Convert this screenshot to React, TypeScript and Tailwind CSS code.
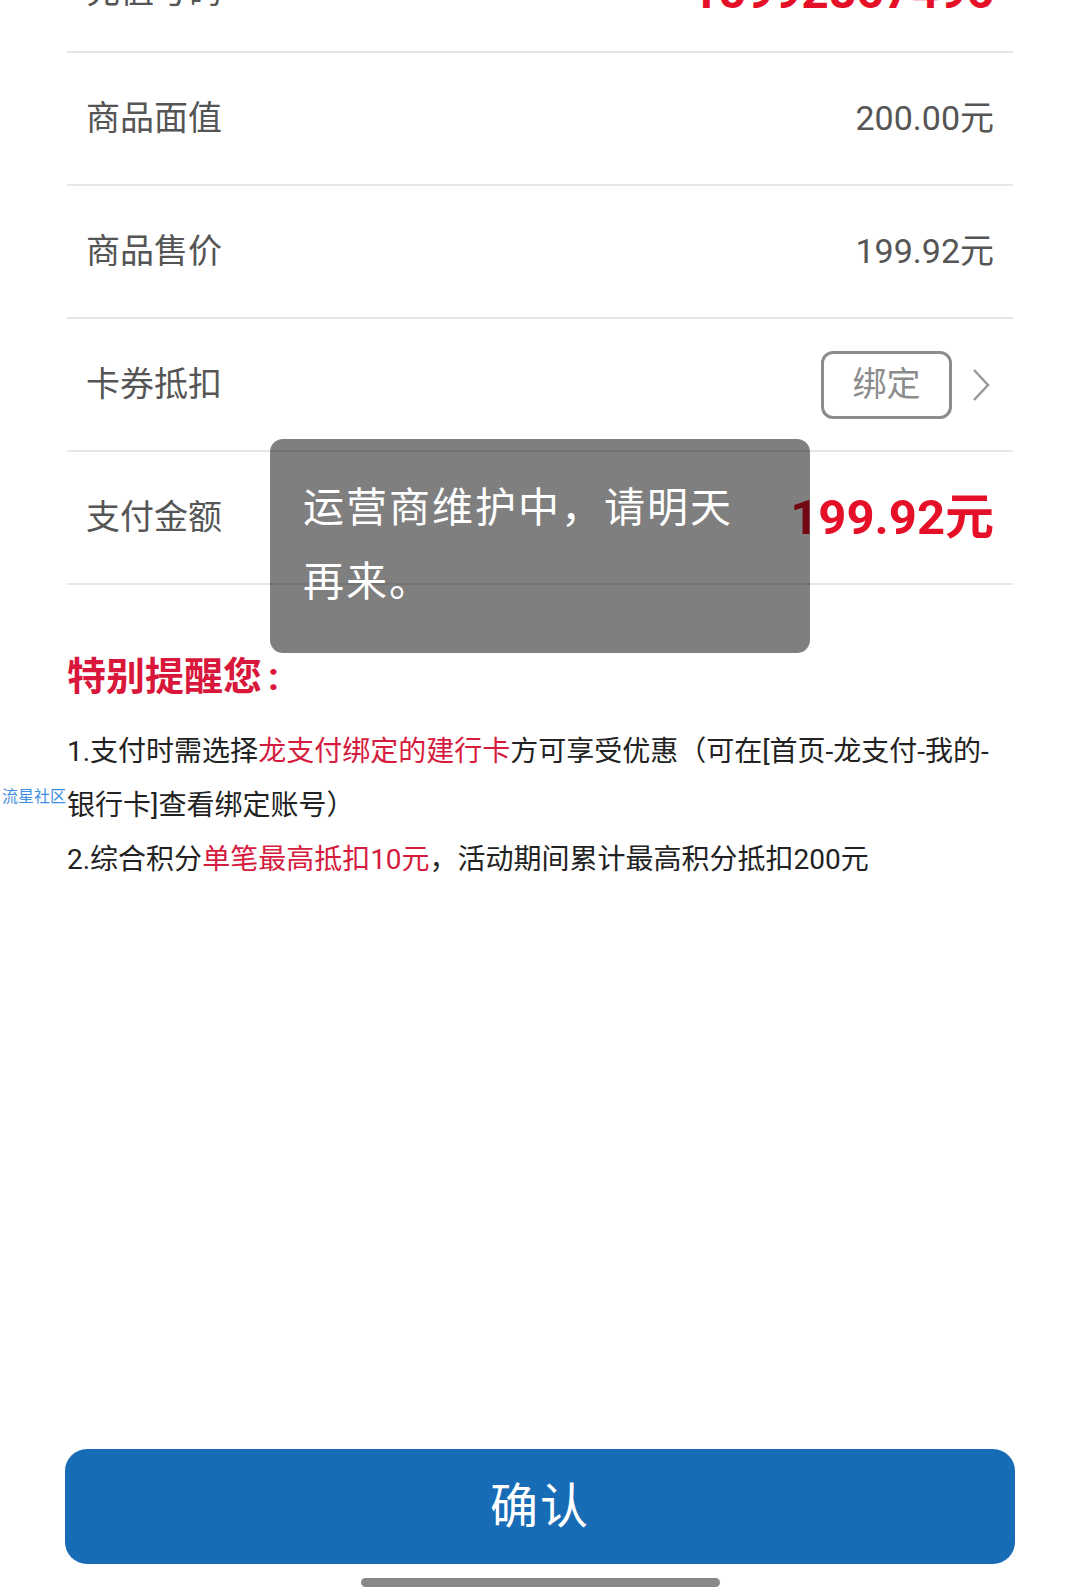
import React from "react";

const font = { fontFamily: '"Roboto", "Noto Sans CJK SC", sans-serif' };

function Row({ label, children, className = "" }: { label: string; children: React.ReactNode; className?: string }) {
  return (
    <div className={`flex h-[133px] items-center justify-between border-b-2 border-[#e6e6e6] pl-[19px] pr-[19px] ${className}`}>
      <span className="text-[34px] text-[#555555]">{label}</span>
      {children}
    </div>
  );
}

export default function App() {
  return (
    <div
      className="relative flex h-[1593px] w-[1080px] flex-col overflow-hidden bg-white"
      style={font}
    >
      <div className="px-[67px]">
        <Row label="充值号码" className="-mt-[80px] h-[127px] pt-[12px]">
          <span className="text-[48px] font-bold text-[#e60f28]">15992867496</span>
        </Row>
        <Row label="商品面值">
          <span className="text-[34px] text-[#555555]">200.00元</span>
        </Row>
        <Row label="商品售价">
          <span className="text-[34px] text-[#555555]">199.92元</span>
        </Row>
        <Row label="卡券抵扣">
          <div className="flex items-center gap-[20px]">
            <div className="flex h-[68px] w-[131px] items-center justify-center rounded-[12px] border-[3px] border-[#8c8c8c] text-[34px] text-[#8c8c8c]">
              绑定
            </div>
            <svg width="18" height="34" viewBox="0 0 18 34" className="mr-[4px]">
              <polyline points="2,2 16,17 2,32" fill="none" stroke="#999999" strokeWidth="2.5" />
            </svg>
          </div>
        </Row>
        <Row label="支付金额">
          <span className="text-[49px] font-bold text-[#e60f28]">199.92元</span>
        </Row>

        <div className="mt-[67px] text-[39px] font-bold leading-[50px] text-[#d8173b]">特别提醒您<span className="ml-[6px]">:</span></div>

        <div className="relative mt-[23px] text-[28px] leading-[54px] text-[#222222]">
          <p>
            1.支付时需选择<span className="text-[#d61c3e]">龙支付绑定的建行卡</span>方可享受优惠（可在[首页-龙支付-我的-银行卡]查看绑定账号）
          </p>
          <p>
            2.综合积分<span className="text-[#d61c3e]">单笔最高抵扣10元</span>，活动期间累计最高积分抵扣200元
          </p>
        </div>
      </div>

      <div className="mt-auto px-[65px]">
        <button className="flex h-[115px] w-full items-center justify-center rounded-[22px] bg-[#176cb5] text-[48px] tracking-[2px] text-white">
          确认
        </button>
      </div>
      <div className="mb-[6px] mt-[14px] flex justify-center">
        <div className="h-[9px] w-[359px] rounded-full bg-[#888888]"></div>
      </div>

      <div className="absolute left-[2px] top-[786px] text-[16px] leading-[22px] text-[#3f8fe0]">流星社区</div>

      <div className="absolute left-[270px] top-[439px] h-[214px] w-[540px] rounded-[13px] bg-black/50 px-[33px] py-[32px]">
        <p className="w-[450px] text-[41px] leading-[74px] tracking-[2px] text-white">运营商维护中，请明天再来。</p>
      </div>
    </div>
  );
}
